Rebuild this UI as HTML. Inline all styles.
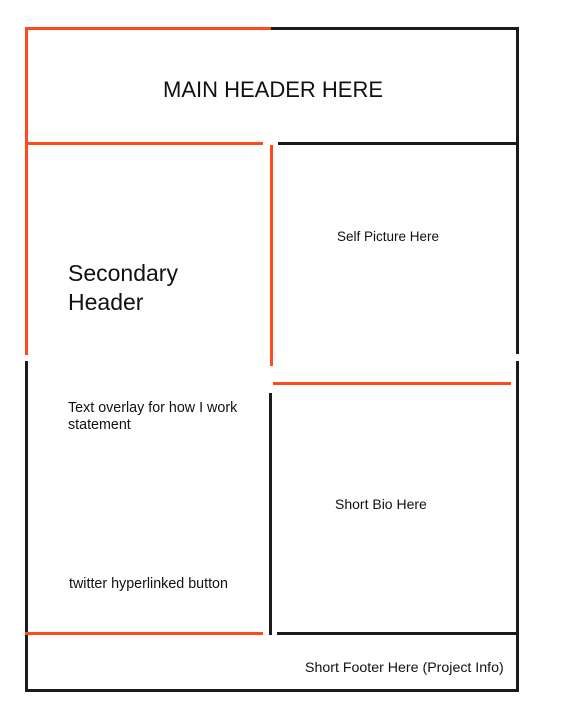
<!DOCTYPE html>
<html><head><meta charset="utf-8"><style>
body{margin:0;width:565px;height:723px;background:#fff;position:relative;overflow:hidden;font-family:"Liberation Sans",sans-serif;color:#111}
.l{position:absolute}
.o{background:#ff4a1c}
.k{background:#1a1a1a}
.t{position:absolute;white-space:nowrap}
</style></head><body>
<div class="l o" style="left:25px;top:27px;width:246px;height:3px"></div>
<div class="l k" style="left:271px;top:27px;width:248px;height:3px"></div>
<div class="l o" style="left:25px;top:27px;width:3px;height:328px"></div>
<div class="l k" style="left:25px;top:361px;width:3px;height:331px"></div>
<div class="l k" style="left:516px;top:27px;width:3px;height:327px"></div>
<div class="l k" style="left:516px;top:361px;width:3px;height:331px"></div>
<div class="l k" style="left:25px;top:689px;width:494px;height:3px"></div>
<div class="l o" style="left:25px;top:142px;width:238px;height:3px"></div>
<div class="l k" style="left:278px;top:142px;width:241px;height:3px"></div>
<div class="l o" style="left:270px;top:145px;width:3px;height:221px"></div>
<div class="l o" style="left:273px;top:382px;width:238px;height:3px"></div>
<div class="l k" style="left:269px;top:393px;width:3px;height:242px"></div>
<div class="l o" style="left:25px;top:632px;width:238px;height:3px"></div>
<div class="l k" style="left:277px;top:632px;width:242px;height:3px"></div>
<div class="t" style="left:163px;top:77px;font-size:22px">MAIN HEADER HERE</div>
<div class="t" style="left:337px;top:229px;font-size:13.5px">Self Picture Here</div>
<div class="t" style="left:68px;top:259px;font-size:23px;line-height:29px">Secondary<br>Header</div>
<div class="t" style="left:68px;top:400px;font-size:14.3px;line-height:17px">Text overlay for how I work<br>statement</div>
<div class="t" style="left:335px;top:496px;font-size:14px">Short Bio Here</div>
<div class="t" style="left:69px;top:576px;font-size:14.3px">twitter hyperlinked button</div>
<div class="t" style="left:305px;top:660px;font-size:14.2px">Short Footer Here (Project Info)</div>
</body></html>
